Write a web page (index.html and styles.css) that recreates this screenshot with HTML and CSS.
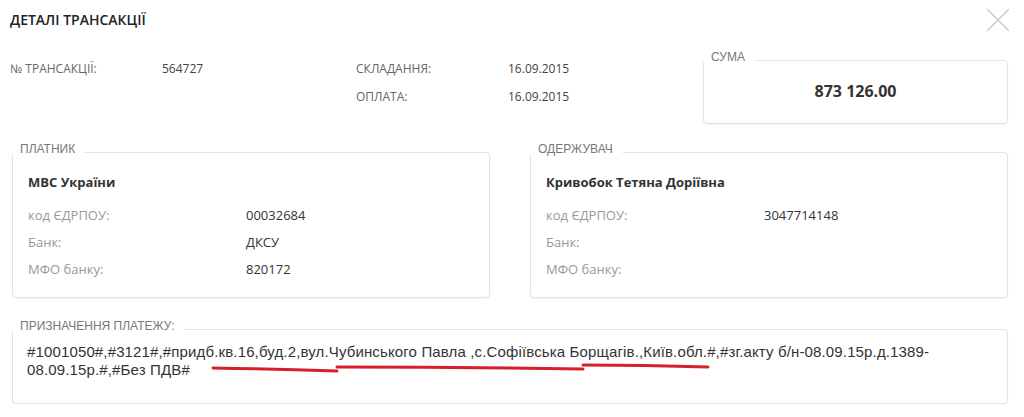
FILE: index.html
```html
<!DOCTYPE html>
<html lang="uk">
<head>
<meta charset="UTF-8">
<meta name="viewport" content="width=device-width, initial-scale=1.0">
<title>Деталі трансакції</title>
<link rel="stylesheet" href="styles.css">
</head>
<body>

<div class="modal">
  <div class="modal-header">
    <h1 class="modal-title">ДЕТАЛІ ТРАНСАКЦІЇ</h1>
    <button class="close" type="button" aria-label="Закрити">
      <svg width="24" height="24" viewBox="0 0 24 24">
        <path d="M1 1 L23 23 M23 1 L1 23" stroke="#cccccc" stroke-width="1.6" fill="none"/>
      </svg>
    </button>
  </div>

  <div class="summary">
    <div class="info">
      <span class="info-label">№ ТРАНСАКЦІЇ:</span>
      <span class="info-value">564727</span>
      <span class="info-label">СКЛАДАННЯ:</span>
      <span class="info-value">16.09.2015</span>
      <span></span>
      <span></span>
      <span class="info-label">ОПЛАТА:</span>
      <span class="info-value">16.09.2015</span>
    </div>

    <fieldset class="box sum">
      <legend>СУМА</legend>
      <div class="sum-value">873 126.00</div>
    </fieldset>
  </div>

  <div class="parties">
    <fieldset class="box party">
      <legend>ПЛАТНИК</legend>
      <div class="party-body">
        <div class="party-name">МВС України</div>
        <div class="row"><span class="row-label">код ЄДРПОУ:</span><span class="row-value">00032684</span></div>
        <div class="row"><span class="row-label">Банк:</span><span class="row-value">ДКСУ</span></div>
        <div class="row"><span class="row-label">МФО банку:</span><span class="row-value">820172</span></div>
      </div>
    </fieldset>

    <fieldset class="box party">
      <legend>ОДЕРЖУВАЧ</legend>
      <div class="party-body">
        <div class="party-name">Кривобок Тетяна Доріївна</div>
        <div class="row"><span class="row-label">код ЄДРПОУ:</span><span class="row-value">3047714148</span></div>
        <div class="row"><span class="row-label">Банк:</span><span class="row-value"></span></div>
        <div class="row"><span class="row-label">МФО банку:</span><span class="row-value"></span></div>
      </div>
    </fieldset>
  </div>

  <fieldset class="box purpose">
    <legend>ПРИЗНАЧЕННЯ ПЛАТЕЖУ:</legend>
    <div class="purpose-body">
      <p class="purpose-text">#1001050#,#3121#,#придб.кв.16,буд.2,вул.Чубинського Павла ,с.Софіївська Борщагів.,Київ.обл.#,#зг.акту б/н-08.09.15р.д.1389-08.09.15р.#,#Без ПДВ#</p>
      <!-- hand-drawn red underline -->
      <svg class="marker" width="996" height="60" viewBox="0 0 996 60">
        <path d="M200 29 Q262 30 324 32" stroke="#d61f2b" stroke-width="3" fill="none" stroke-linecap="round"/>
        <path d="M324 28 Q447 28 570 30" stroke="#d61f2b" stroke-width="3" fill="none" stroke-linecap="round"/>
        <path d="M570 26 Q632 26 695 28" stroke="#d61f2b" stroke-width="3" fill="none" stroke-linecap="round"/>
      </svg>
    </div>
  </fieldset>
</div>

</body>
</html>
```

FILE: styles.css
```css
body {
  margin: 0;
  background-color: #fff;
  font-family: "Open Sans", Arial, sans-serif;
  color: #333;
}

.modal {
  width: 996px;
  padding: 8px 16px 0 12px;
}

.modal-header {
  display: flex;
  justify-content: space-between;
  align-items: flex-start;
}

.modal-title {
  margin: 2px 0 0 -2px;
  font-size: 14px;
  line-height: 20px;
  font-weight: 600;
  color: #222;
}

.close {
  border: none;
  background: none;
  padding: 0;
  margin: 0 -2px 0 0;
  width: 24px;
  height: 24px;
  cursor: pointer;
}

.summary {
  display: flex;
  align-items: flex-start;
  margin-top: 18px;
}

.info {
  flex: 1;
  display: grid;
  grid-template-columns: 152px 194px 152px auto;
  grid-auto-rows: 28px;
  align-items: center;
  margin-left: -2px;
  padding-top: 4px;
  font-size: 12px;
}

.info-label {
  color: #666;
}

.info-value {
  color: #444;
}

.box {
  margin: 0;
  padding: 0;
  min-width: 0;
  border: 1px solid #dfe3e8;
  border-radius: 4px;
  box-shadow: 0 1px 2px rgba(0, 0, 0, 0.05);
}

.box legend {
  padding: 0 10px 6px 7px;
  font-family: "Liberation Sans", Arial, sans-serif;
  font-size: 12px;
  line-height: 14px;
  color: #777;
}

.sum {
  width: 305px;
  box-sizing: border-box;
}

.sum-value {
  padding: 10px 0 21px;
  text-align: center;
  font-size: 16px;
  line-height: 22px;
  font-weight: 700;
  color: #333;
}

.parties {
  display: flex;
  gap: 40px;
  margin-top: 18px;
}

.party {
  flex: 1;
}

.party-body {
  padding: 10px 15px 14px;
  font-size: 13px;
}

.party-name {
  line-height: 20px;
  font-weight: 700;
  color: #333;
  margin-bottom: 10px;
}

.row {
  display: flex;
  line-height: 27px;
}

.row-label {
  width: 218px;
  color: #999;
}

.row-value {
  color: #333;
}

.purpose {
  margin-top: 21px;
}

.purpose-body {
  position: relative;
  padding: 4px 15px 24px 14px;
}

.purpose-text {
  margin: 0;
  font-family: "Liberation Sans", Arial, sans-serif;
  font-size: 15px;
  letter-spacing: 0.14px;
  line-height: 18px;
  color: #333;
}

.marker {
  position: absolute;
  left: 0;
  top: 0;
  pointer-events: none;
}
```
